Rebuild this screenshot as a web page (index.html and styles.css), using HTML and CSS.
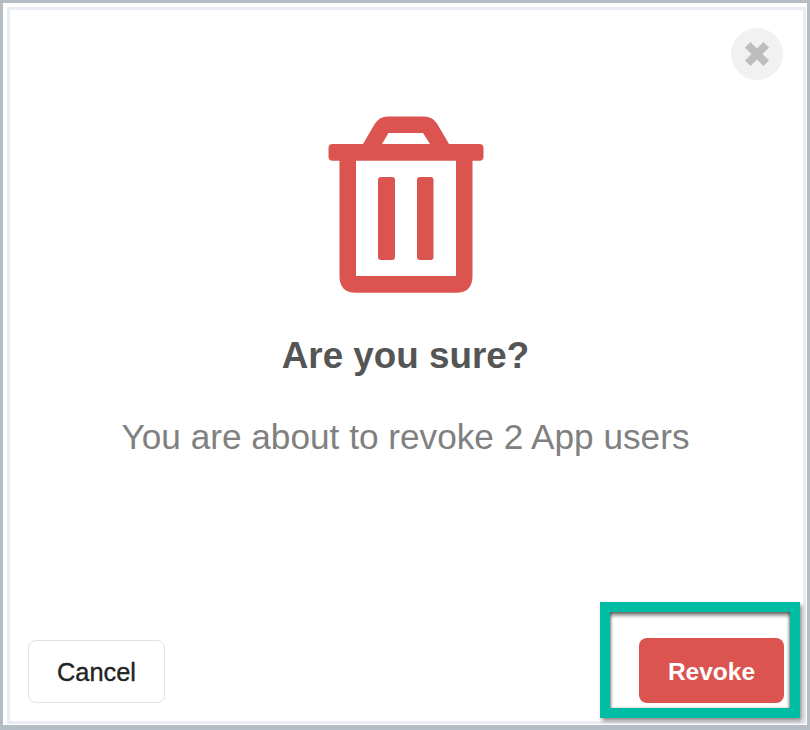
FILE: index.html
```html
<!DOCTYPE html>
<html lang="en">
<head>
<meta charset="utf-8">
<title>Revoke App users</title>
<link rel="stylesheet" href="styles.css">
</head>
<body>
<div class="frame">
  <div class="modal">
    <button class="close" aria-label="Close">
      <svg width="28" height="28" viewBox="0 0 28 28"><path class="close-x" d="M2 7.500 7.500 2 14 8.500 20.500 2 26 7.500 19.500 14 26 20.500 20.500 26 14 19.500 7.500 26 2 20.500 8.500 14Z"/></svg>
    </button>
    <div class="content">
      <svg class="trash" width="156" height="178" viewBox="328 116 156 178">
        <path class="trash-fill" fill-rule="evenodd" d="M332.500 144H363L375 123.500Q379.500 116.500 388 116.500H424Q432.500 116.500 437 123.500L449 144H479.500Q483.500 144 483.500 148V156.700Q483.500 160.700 479.500 160.700H472.500V276Q472.500 292.800 456 292.800H356Q339.500 292.800 339.500 276V160.700H332.500Q328.500 160.700 328.500 156.700V148Q328.500 144 332.500 144ZM382 144H430L423 133H388.500ZM356 160.700V276H456V160.700Z"/>
        <rect class="trash-fill" x="378" y="177" width="17" height="83" rx="3"/>
        <rect class="trash-fill" x="417" y="177" width="16.500" height="83" rx="3"/>
      </svg>
      <h2 class="title">Are you sure?</h2>
      <p class="message">You are about to revoke 2 App users</p>
    </div>
    <div class="actions">
      <button class="btn btn-cancel">Cancel</button>
      <button class="btn btn-revoke">Revoke</button>
    </div>
    <div class="highlight"></div>
  </div>
</div>
</body>
</html>
```
FILE: styles.css
```css
* { box-sizing: border-box; }
html, body { margin: 0; height: 100%; }
body {
  background: #b4bcc4;
  padding: 3px 3px 5px 3px;
  font-family: "Liberation Sans", Arial, sans-serif;
}
.frame {
  height: 100%;
  background: #fff;
  padding: 4px 1px 0 4px;
}
.modal {
  position: relative;
  height: 717px;
  border: 3px solid #e9ecf3;
  background: #fff;
  display: flex;
  flex-direction: column;
}
.close {
  position: absolute;
  top: 18px;
  right: 20px;
  width: 52px;
  height: 52px;
  border: 0;
  border-radius: 50%;
  background: #f1f1f1;
  padding: 0;
  display: flex;
  align-items: center;
  justify-content: center;
}
.close-x { fill: #bdbdbd; }
.content {
  flex: 1;
  display: flex;
  flex-direction: column;
  align-items: center;
  padding: 106px 2px 0 0;
}
.trash { display: block; }
.trash-fill { fill: #db5450; }
.title {
  margin: 40px 0 0;
  font-size: 36.8px;
  line-height: 44px;
  font-weight: 700;
  color: #555;
}
.message {
  margin: 37px 0 0;
  font-size: 35.2px;
  line-height: 44px;
  font-weight: 400;
  color: #808080;
}
.actions {
  display: flex;
  justify-content: space-between;
  align-items: flex-end;
  padding: 0 19px 18px 18px;
}
.btn {
  font-family: inherit;
  border-radius: 8px;
  padding: 2px 0 0;
}
.btn-cancel {
  width: 137px;
  height: 63px;
  border: 1px solid #e2e2e2;
  background: #fff;
  color: #222;
  font-size: 25.4px;
  -webkit-text-stroke: 0.35px #222;
}
.btn-revoke {
  width: 145px;
  height: 65px;
  border: 0;
  background: #db5450;
  color: #fff;
  font-size: 24.5px;
  font-weight: 700;
}
.highlight {
  position: absolute;
  left: 590px;
  top: 592px;
  width: 200px;
  height: 116px;
  border: 10px solid #00bca2;
  box-shadow: 2px 3px 4px rgba(0, 0, 0, 0.45), inset 0 4px 4px -1px rgba(0, 0, 0, 0.6), inset 2px 0 3px -1px rgba(0, 0, 0, 0.35), inset -2px 0 3px -1px rgba(0, 0, 0, 0.35);
  pointer-events: none;
}
```
